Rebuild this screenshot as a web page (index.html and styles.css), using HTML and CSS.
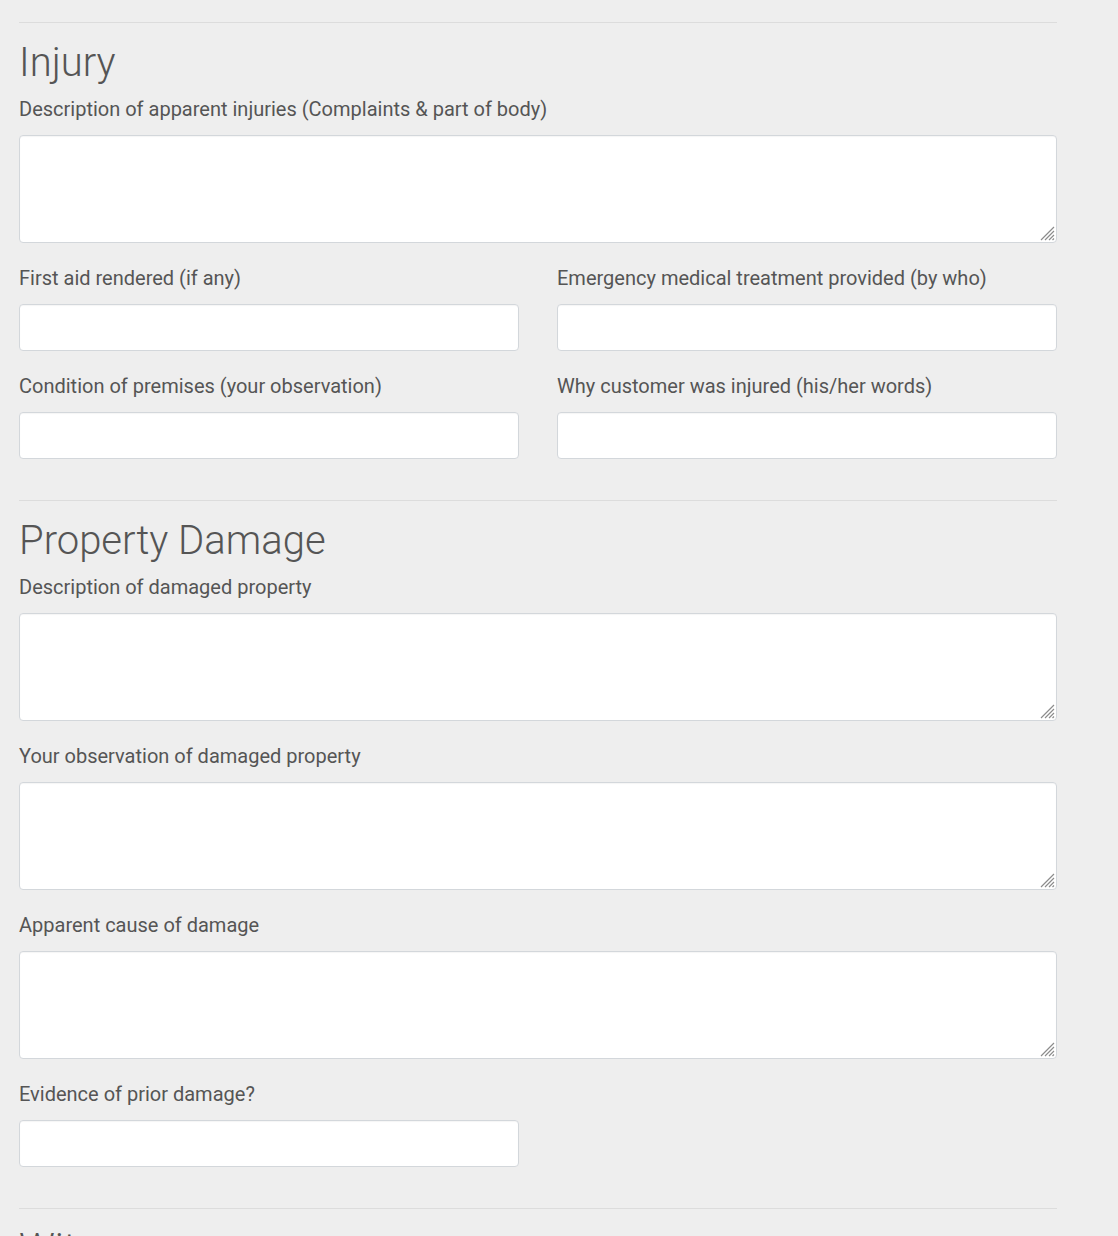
FILE: index.html
```html
<!DOCTYPE html>
<html>
<head>
<meta charset="utf-8">
<link rel="stylesheet" href="styles.css">
</head>
<body>
<div class="page">
  <section class="section">
    <hr class="rule">
    <h2 class="section-title">Injury</h2>
    <div class="field field-area">
      <label class="label">Description of apparent injuries (Complaints &amp; part of body)</label>
      <div class="area-wrap">
        <textarea class="control area"></textarea>
        <svg class="grip" width="16" height="16" viewBox="0 0 16 16"><path d="M15 2L2 15M15 6L6 15M15 10L10 15M15 13.5L13.5 15" stroke="#8c8c8c" stroke-width="1.2" fill="none"/></svg>
      </div>
    </div>
    <div class="row">
      <div class="field">
        <label class="label">First aid rendered (if any)</label>
        <input class="control" type="text">
      </div>
      <div class="field">
        <label class="label">Emergency medical treatment provided (by who)</label>
        <input class="control" type="text">
      </div>
    </div>
    <div class="row">
      <div class="field">
        <label class="label">Condition of premises (your observation)</label>
        <input class="control" type="text">
      </div>
      <div class="field">
        <label class="label">Why customer was injured (his/her words)</label>
        <input class="control" type="text">
      </div>
    </div>
  </section>
  <section class="section">
    <hr class="rule">
    <h2 class="section-title">Property Damage</h2>
    <div class="field field-area">
      <label class="label">Description of damaged property</label>
      <div class="area-wrap">
        <textarea class="control area"></textarea>
        <svg class="grip" width="16" height="16" viewBox="0 0 16 16"><path d="M15 2L2 15M15 6L6 15M15 10L10 15M15 13.5L13.5 15" stroke="#8c8c8c" stroke-width="1.2" fill="none"/></svg>
      </div>
    </div>
    <div class="field field-area">
      <label class="label">Your observation of damaged property</label>
      <div class="area-wrap">
        <textarea class="control area"></textarea>
        <svg class="grip" width="16" height="16" viewBox="0 0 16 16"><path d="M15 2L2 15M15 6L6 15M15 10L10 15M15 13.5L13.5 15" stroke="#8c8c8c" stroke-width="1.2" fill="none"/></svg>
      </div>
    </div>
    <div class="field field-area">
      <label class="label">Apparent cause of damage</label>
      <div class="area-wrap">
        <textarea class="control area"></textarea>
        <svg class="grip" width="16" height="16" viewBox="0 0 16 16"><path d="M15 2L2 15M15 6L6 15M15 10L10 15M15 13.5L13.5 15" stroke="#8c8c8c" stroke-width="1.2" fill="none"/></svg>
      </div>
    </div>
    <div class="row">
      <div class="field">
        <label class="label">Evidence of prior damage?</label>
        <input class="control" type="text">
      </div>
      <div></div>
    </div>
  </section>
  <section class="section">
    <hr class="rule">
    <h2 class="section-title">Witness</h2>
  </section>
</div>
</body>
</html>
```

FILE: styles.css
```css
html, body {
  margin: 0;
  padding: 0;
  background: #eeeeee;
}
body {
  font-family: Roboto, "Noto Sans", Arial, sans-serif;
  color: #555555;
}
.page {
  width: 1038px;
  margin-left: 19px;
  padding-top: 22px;
}
.section {
  padding-bottom: 20px;
}
.rule {
  margin: 0;
  border: 0;
  border-top: 1px solid #dcdcdc;
  height: 0;
}
.section-title {
  margin: 17px 0 9px 0;
  font-size: 40px;
  line-height: 46px;
  font-weight: 300;
  color: #555555;
}
.row {
  display: grid;
  grid-template-columns: 500px 500px;
  column-gap: 38px;
}
.field {
  margin-bottom: 21px;
}
.field-area {
  margin-bottom: 21px;
}
.label {
  display: block;
  font-size: 20px;
  line-height: 28px;
  margin-bottom: 12px;
  color: #555555;
}
.control {
  display: block;
  box-sizing: border-box;
  width: 100%;
  height: 47px;
  margin: 0;
  padding: 6px 12px;
  background: #ffffff;
  border: 1px solid #d3d7db;
  border-radius: 4px;
  box-shadow: inset 0 1px 1px rgba(0,0,0,0.04);
  font-family: inherit;
  font-size: 18px;
  outline: none;
}
.area-wrap {
  position: relative;
}
.area {
  height: 108px;
  resize: none;
}
.grip {
  position: absolute;
  right: 2px;
  bottom: 2px;
}
```
